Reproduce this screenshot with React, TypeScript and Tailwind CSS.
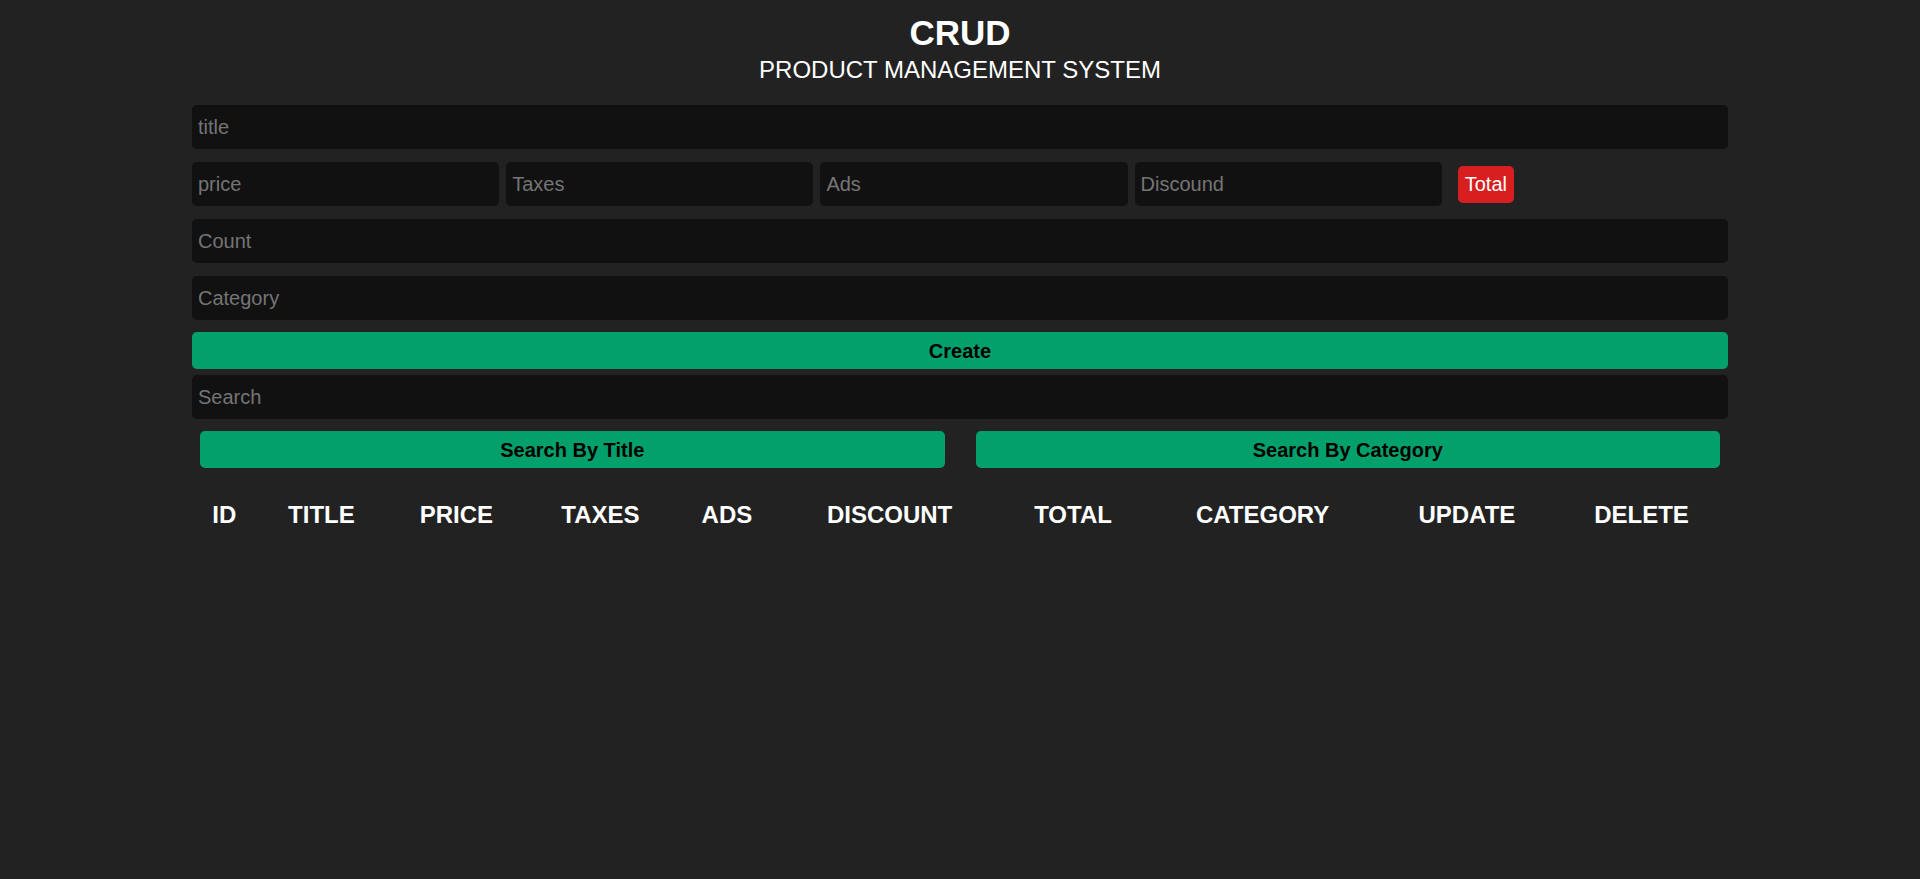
import React from 'react';

const inputCls =
  'block w-full h-[44px] px-[6px] bg-[#111111] text-white text-[20px] rounded-[5px] outline-none border-none placeholder:text-[#757575]';

const greenBtn =
  'h-[37px] bg-[#04a06c] text-black text-[20px] font-bold rounded-[5px] cursor-pointer';

const columns = ['ID', 'TITLE', 'PRICE', 'TAXES', 'ADS', 'DISCOUNT', 'TOTAL', 'CATEGORY', 'UPDATE', 'DELETE'];

export default function App() {
  return (
    <div className="min-h-screen bg-[#222222] text-white font-['Liberation_Sans',Arial,sans-serif]">
      <div className="w-[80%] mx-auto pt-[13px]">
        <div className="text-center">
          <h2 className="text-[35px] font-bold leading-[normal]">CRUD</h2>
          <p className="text-[24px] leading-[normal] mt-[3px]">PRODUCT MANAGEMENT SYSTEM</p>
        </div>

        <div className="mt-[21px] flex flex-col gap-[13px]">
          <input className={inputCls} type="text" placeholder="title" />
          <div className="flex items-center gap-[7px]">
            <input className={inputCls + ' !w-[20%]'} type="number" placeholder="price" />
            <input className={inputCls + ' !w-[20%]'} type="number" placeholder="Taxes" />
            <input className={inputCls + ' !w-[20%]'} type="number" placeholder="Ads" />
            <input className={inputCls + ' !w-[20%]'} type="number" placeholder="Discound" />
            <small className="ml-[9px] h-[37px] px-[7px] flex items-center bg-[#d71f1f] text-white text-[20px] rounded-[5px]">
              Total
            </small>
          </div>
          <input className={inputCls} type="number" placeholder="Count" />
          <input className={inputCls} type="text" placeholder="Category" />
        </div>

        <button className={greenBtn + ' w-full mt-[12px]'}>Create</button>

        <input className={inputCls + ' mt-[6px]'} type="text" placeholder="Search" />

        <div className="flex gap-[31px] px-[8px] mt-[12px]">
          <button className={greenBtn + ' flex-1'}>Search By Title</button>
          <button className={greenBtn + ' flex-1'}>Search By Category</button>
        </div>

        <table className="w-full mt-[25px]">
          <thead>
            <tr>
              {columns.map(c => (
                <th key={c} className="px-[9px] py-[8px] text-[24px] font-bold leading-[normal] text-center">
                  {c}
                </th>
              ))}
            </tr>
          </thead>
          <tbody />
        </table>
      </div>
    </div>
  );
}
